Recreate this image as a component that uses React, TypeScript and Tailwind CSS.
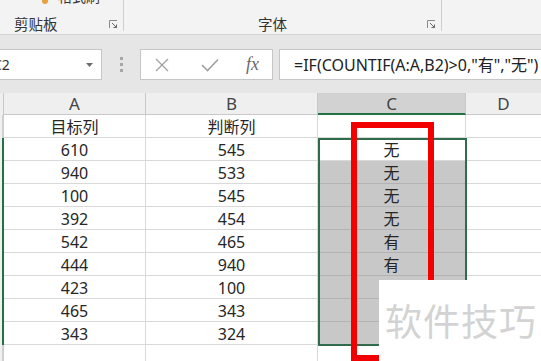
import React from "react";

const ROWS: [string, string, string][] = [
  ["目标列", "判断列", ""],
  ["610", "545", "无"],
  ["940", "533", "无"],
  ["100", "545", "无"],
  ["392", "454", "无"],
  ["542", "465", "有"],
  ["444", "940", "有"],
  ["423", "100", ""],
  ["465", "343", ""],
  ["343", "324", ""],
];

function Launcher() {
  return (
    <svg width="9" height="9" viewBox="0 0 9 9" className="shrink-0">
      <path d="M0.5 8V0.5H8" fill="none" stroke="#8a8a8a" strokeWidth="1" />
      <path d="M3 3L7.5 7.5M7.5 4.5V7.5H4.5" fill="none" stroke="#666" strokeWidth="1" />
    </svg>
  );
}

export default function App() {
  return (
    <div
      className="relative w-[541px] h-[361px] overflow-hidden bg-white text-[#262626]"
      style={{ fontFamily: '"Noto Sans", "Noto Sans CJK SC", sans-serif' }}
    >
      {/* ribbon */}
      <div className="flex h-[35px] bg-[#f3f3f3] border-b border-[#d5d5d5]">
        <div className="relative w-[124px] border-r border-[#cfcfcf] mb-[3px]">
          <div className="flex items-end h-[4px] overflow-hidden pl-[42px] gap-[10px]">
            <span className="w-[6px] h-[4px] rounded-b bg-[#e8a23c]" />
            <span className="text-[14px] leading-[14px] text-[#333]">格式刷</span>
          </div>
          <div className="flex items-center justify-between pl-[14px] pr-[5px] mt-[12px]">
            <span className="text-[14.5px] leading-[16px] text-[#333]">剪贴板</span>
            <Launcher />
          </div>
        </div>
        <div className="w-[318px] border-r border-[#cfcfcf] mb-[3px]">
          <div className="flex items-center justify-between pl-[134px] pr-[5px] mt-[16px]">
            <span className="text-[14.5px] leading-[16px] text-[#333]">字体</span>
            <Launcher />
          </div>
        </div>
        <div className="flex-1" />
      </div>

      {/* formula bar */}
      <div className="h-[58px] bg-[#e6e6e6] pt-[14px]">
        <div className="flex items-center h-[31px]">
          <div className="relative flex items-center justify-between w-[103px] h-[31px] ml-[-1px] bg-white border border-[#c6c6c6] pr-[8px]">
            <span className="ml-[-7px] text-[14px] text-[#333]">C2</span>
            <svg width="7" height="4" viewBox="0 0 7 4">
              <path d="M0 0H7L3.5 4Z" fill="#6d6d6d" />
            </svg>
          </div>
          <div className="flex flex-col items-center gap-[3px] w-[38px]">
            <span className="w-[3px] h-[3px] bg-[#a6a6a6]" />
            <span className="w-[3px] h-[3px] bg-[#a6a6a6]" />
            <span className="w-[3px] h-[3px] bg-[#a6a6a6]" />
          </div>
          <div className="flex items-center w-[133px] h-[31px] bg-white border border-[#c6c6c6]">
            <svg width="14" height="14" viewBox="0 0 14 14" className="ml-[14px]">
              <path d="M1 1L13 13M13 1L1 13" stroke="#a0a0a0" strokeWidth="1.3" />
            </svg>
            <svg width="18" height="14" viewBox="0 0 18 14" className="ml-[32px]">
              <path d="M1 7L6.5 12.5L17 1.5" fill="none" stroke="#a0a0a0" strokeWidth="1.6" />
            </svg>
            <span
              className="ml-[27px] text-[18px] italic text-[#6a6a6a]"
              style={{ fontFamily: '"Liberation Serif", serif' }}
            >
              fx
            </span>
          </div>
          <div className="flex items-center flex-1 h-[31px] ml-[6px] mr-[-20px] bg-white border border-[#c6c6c6] pl-[14px] overflow-hidden whitespace-nowrap">
            <span className="text-[16px] text-[#222]">=IF(COUNTIF(A:A,B2)&gt;0,"有","无")</span>
          </div>
        </div>
      </div>

      {/* column headers */}
      <div className="flex h-[22px] bg-[#efefef] text-[17px] text-[#444] leading-[21px]">
        <div className="w-[4px] border-r border-[#c8c8c8]" />
        <div className="w-[142px] border-r border-b border-[#c8c8c8] text-center">A</div>
        <div className="w-[172px] border-r border-b border-[#c8c8c8] text-center">B</div>
        <div className="w-[148px] bg-[#d2d2d2] border-r border-[#c8c8c8] border-b-2 border-b-[#217346] text-center">C</div>
        <div className="flex-1 border-b border-[#c8c8c8] text-center">D</div>
      </div>

      {/* rows */}
      {[...ROWS, ["", "", ""]].map((r, i) => {
        const sel = i >= 1 && i <= 9;
        const gray = i >= 2 && i <= 9;
        return (
          <div key={i} className="flex h-[23px] text-[16px] leading-[22px] pt-[1px]">
            <div
              className={
                "w-[4px] -mt-[1px] bg-[#f0f0f0] border-r-2 " +
                (sel ? "border-[#217346]" : "border-[#cfcfcf]")
              }
            />
            <div className="w-[142px] -mt-[1px] pt-[1px] border-r border-b border-[#d9d9d9] text-center">{r[0]}</div>
            <div className="w-[172px] -mt-[1px] pt-[1px] border-r border-b border-[#d9d9d9] text-center">{r[1]}</div>
            <div
              className={
                "w-[148px] -mt-[1px] pt-[1px] border-r border-b text-center " +
                (gray ? "bg-[#c8c8c8] border-[#b3b3b3]" : "border-[#d9d9d9]")
              }
            >
              {r[2]}
            </div>
            <div className="flex-1 -mt-[1px] border-b border-[#d9d9d9]" />
          </div>
        );
      })}

      {/* selection border */}
      <div className="absolute left-[318px] top-[138px] w-[149px] h-[208px] border-2 border-[#2f6b4c]" />

      {/* red annotation */}
      <div className="absolute left-[351px] top-[122px] w-[83px] h-[239px] border-[6px] border-[#f20000]" />

      {/* watermark */}
      <div className="absolute left-[379px] top-[280px] w-[162px] h-[81px] bg-white flex items-center pl-[6px]">
        <span className="text-[37px] leading-none text-[#d3d3d3] tracking-[1px]" style={{ fontFamily: '"Noto Sans CJK SC", sans-serif' }}>
          软件技巧
        </span>
      </div>
    </div>
  );
}
